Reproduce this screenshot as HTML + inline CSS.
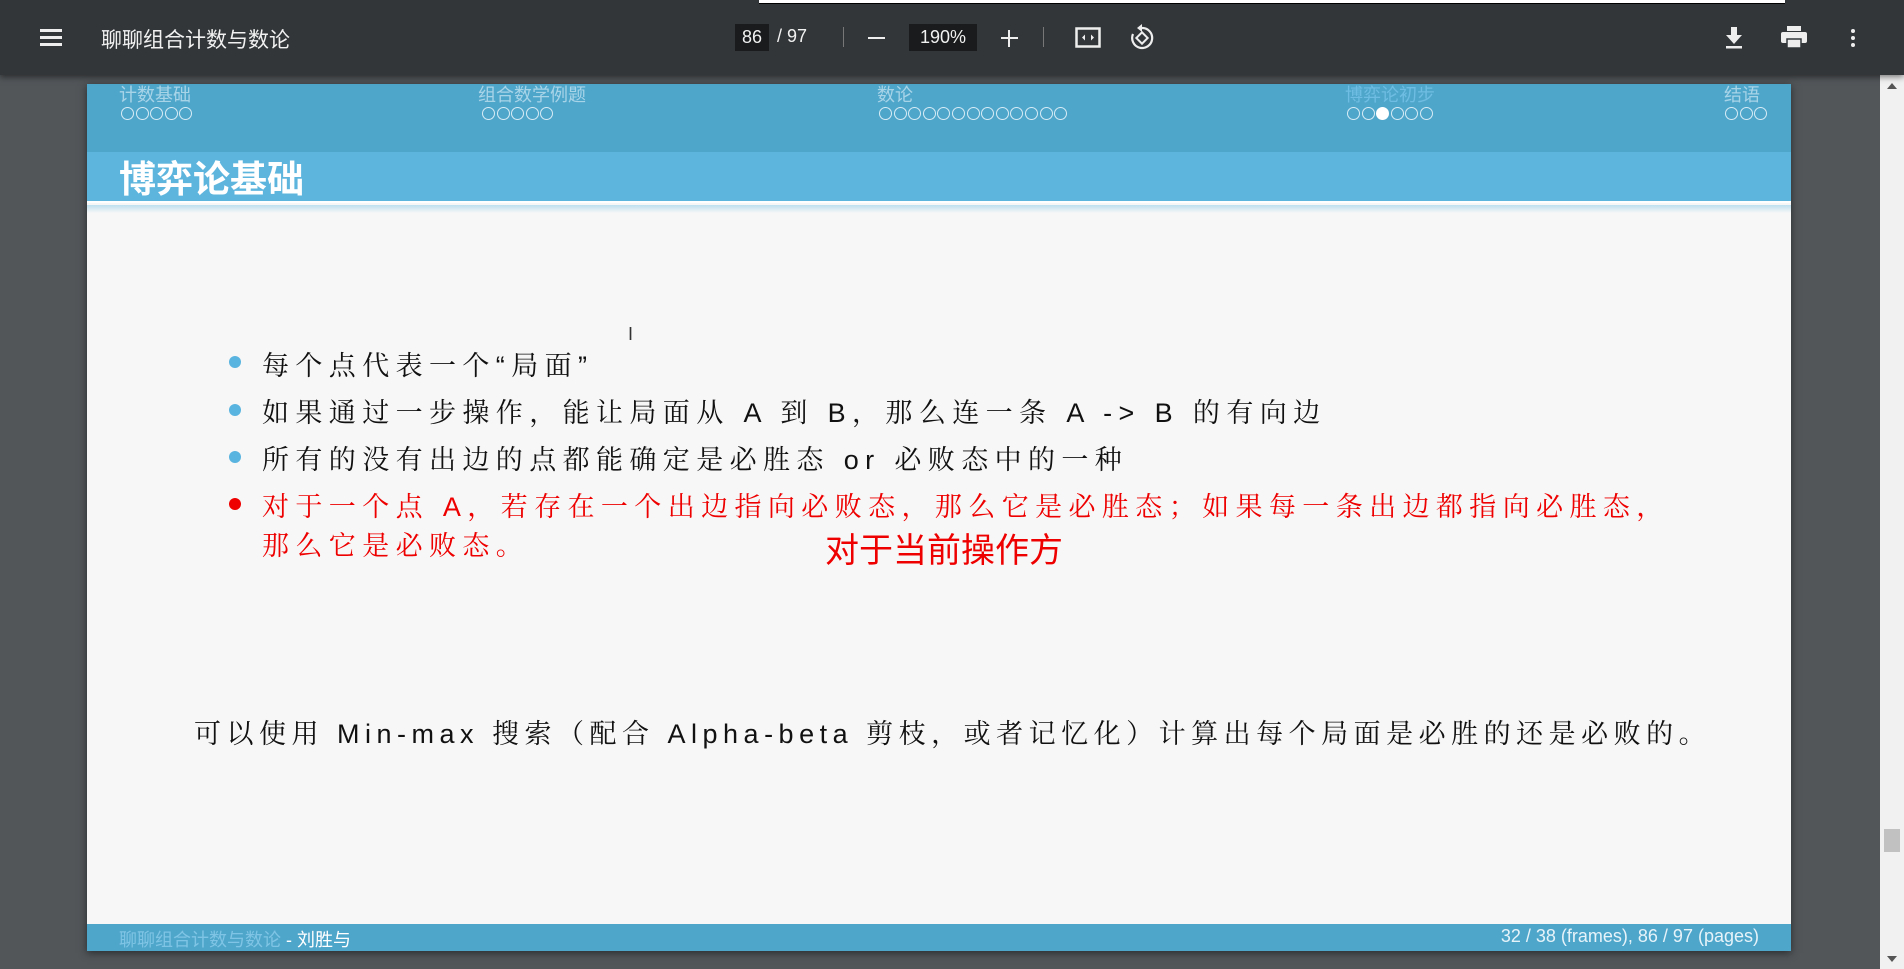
<!DOCTYPE html>
<html><head><meta charset="utf-8"><style>
*{margin:0;padding:0;box-sizing:border-box}
body{width:1904px;height:969px;background:#525659;position:relative;overflow:hidden;font-family:"Liberation Sans","Noto Sans CJK SC",sans-serif}
.tb{position:absolute;left:0;top:0;width:1904px;height:75px;background:#323639;box-shadow:0 2px 6px rgba(0,0,0,.5);color:#f1f1f1;z-index:2}
.abs{position:absolute}
.slide{position:absolute;left:87px;top:84px;width:1704px;height:867px;background:#f7f7f7;box-shadow:0 2px 8px rgba(0,0,0,.5)}
.nav{position:absolute;left:0;top:0;width:100%;height:68px;background:#4fa6cb}
.nav .it{position:absolute;top:1px;color:#a8d4e8;font-size:18px;line-height:20px}
.dots{position:absolute;top:23px;display:flex;gap:1.6px}
.dots i{width:13px;height:13px;border:1.5px solid #d7ecf5;border-radius:50%;display:block}
.dots i.f{background:#fff;border-color:#fff}
.title{position:absolute;left:0;top:68px;width:100%;height:51px;background:#5db5de;border-bottom:2px solid #fff}
.title span{position:absolute;left:32px;top:5px;color:#fff;font-size:37px;font-weight:bold;line-height:46px}
.grad{position:absolute;left:0;top:121px;width:100%;height:8px;background:linear-gradient(#bfe0f0,#f7f7f7)}
.li{position:absolute;left:175px;font-family:"Liberation Sans","Noto Serif CJK SC",serif;font-size:27px;letter-spacing:6.4px;color:#111;white-space:nowrap}
.bul{position:absolute;left:142px;width:12px;height:12px;border-radius:50%;background:#5ab4e0}
.red{color:#ee0000}
.foot{position:absolute;left:0;bottom:0;width:100%;height:27px;background:#4fa6cb;font-size:18px}
.sb{position:absolute;left:1880px;top:75px;width:24px;height:894px;background:#f1f1f1}
</style></head><body>
<div class="tb">
 <div class="abs" style="left:40px;top:29px;width:22px;height:3px;background:#eee;box-shadow:0 7px 0 #eee,0 14px 0 #eee"></div>
 <div class="abs" style="left:101px;top:24px;font-size:21px">聊聊组合计数与数论</div>
 <div class="abs" style="left:735px;top:24px;width:34px;height:27px;background:#191b1c;font-size:18px;text-align:center;line-height:27px">86</div>
 <div class="abs" style="left:777px;top:26px;font-size:18px">/ 97</div>
 <div class="abs" style="left:843px;top:27px;width:1px;height:20px;background:#777"></div>
 <div class="abs" style="left:868px;top:37px;width:17px;height:2px;background:#eee"></div>
 <div class="abs" style="left:909px;top:24px;width:68px;height:27px;background:#191b1c;font-size:18px;text-align:center;line-height:27px">190%</div>
 <div class="abs" style="left:1001px;top:37px;width:17px;height:2px;background:#eee"></div>
 <div class="abs" style="left:1008px;top:30px;width:2px;height:17px;background:#eee"></div>
 <div class="abs" style="left:1043px;top:27px;width:1px;height:20px;background:#777"></div>
 <svg class="abs" style="left:1075px;top:26px" width="26" height="24" viewBox="0 0 26 24"><rect x="1.5" y="2.5" width="23" height="18" fill="none" stroke="#eee" stroke-width="2.5"/><path d="M7 11.5l3-3v6zM19 11.5l-3-3v6z" fill="#eee"/></svg>
 <svg class="abs" style="left:1129px;top:24px" width="26" height="28" viewBox="0 0 26 28"><path d="M13 4a10 10 0 1 1-9 6" fill="none" stroke="#eee" stroke-width="2.2"/><path d="M13 0v8l-5-4z" fill="#eee"/><rect x="9" y="10" width="8" height="8" transform="rotate(45 13 14)" fill="none" stroke="#eee" stroke-width="2"/></svg>
 <svg class="abs" style="left:1724px;top:27px" width="20" height="22" viewBox="0 0 20 22"><path d="M7 0h6v8h5l-8 9-8-9h5z" fill="#eee"/><rect x="2" y="19" width="16" height="2.5" fill="#eee"/></svg>
 <svg class="abs" style="left:1781px;top:26px" width="26" height="22" viewBox="0 0 26 22"><rect x="6" y="0" width="14" height="5" fill="#eee"/><rect x="0" y="6" width="26" height="11" rx="2" fill="#eee"/><rect x="6" y="13" width="14" height="9" fill="#eee" stroke="#323639" stroke-width="1.5"/></svg>
 <div class="abs" style="left:1851px;top:29px;width:4px;height:4px;border-radius:50%;background:#eee;box-shadow:0 7px 0 #eee,0 14px 0 #eee"></div>
</div>
<div class="abs" style="left:759px;top:0;width:1026px;height:4px;background:#fff;border-bottom:1px solid #000;z-index:3"></div>
<div class="slide">
 <div class="nav">
  <div class="it" style="left:32px">计数基础</div><div class="dots" style="left:34px"><i></i><i></i><i></i><i></i><i></i></div>
  <div class="it" style="left:391px">组合数学例题</div><div class="dots" style="left:395px"><i></i><i></i><i></i><i></i><i></i></div>
  <div class="it" style="left:790px">数论</div><div class="dots" style="left:792px"><i></i><i></i><i></i><i></i><i></i><i></i><i></i><i></i><i></i><i></i><i></i><i></i><i></i></div>
  <div class="it" style="left:1258px;color:#6fbde2">博弈论初步</div><div class="dots" style="left:1260px"><i></i><i></i><i class="f"></i><i></i><i></i><i></i></div>
  <div class="it" style="left:1637px">结语</div><div class="dots" style="left:1638px"><i></i><i></i><i></i></div>
 </div>
 <div class="title"><span>博弈论基础</span></div>
 <div class="grad"></div>
 <div class="abs" style="left:541px;top:240px;font-size:18px;color:#333">I</div>
 <div class="bul" style="top:272px"></div><div class="li" style="top:260px">每个点代表一个“局面”</div>
 <div class="bul" style="top:320px"></div><div class="li" style="top:307px">如果通过一步操作，能让局面从 A 到 B，那么连一条 A -&gt; B 的有向边</div>
 <div class="bul" style="top:367px"></div><div class="li" style="top:354px">所有的没有出边的点都能确定是必胜态 or 必败态中的一种</div>
 <div class="bul" style="top:414px;background:#ee0000"></div><div class="li red" style="top:401px">对于一个点 A，若存在一个出边指向必败态，那么它是必胜态；如果每一条出边都指向必胜态，</div>
 <div class="li red" style="top:440px">那么它是必败态。</div>
 <div class="abs red" style="left:738px;top:439px;font-size:34px">对于当前操作方</div>
 <div class="li" style="left:107px;top:628px;letter-spacing:5.5px">可以使用 Min-max 搜索（配合 Alpha-beta 剪枝，或者记忆化）计算出每个局面是必胜的还是必败的。</div>
 <div class="foot">
  <span class="abs" style="left:32px;top:2px;color:#7fc4e4">聊聊组合计数与数论 <span style="color:#fff">- 刘胜与</span></span>
  <span class="abs" style="right:32px;top:2px;color:#e6f3f9">32 / 38 (frames), 86 / 97 (pages)</span>
 </div>
</div>
<div class="sb">
 <div class="abs" style="left:7px;top:8px;width:0;height:0;border-left:5px solid transparent;border-right:5px solid transparent;border-bottom:6px solid #555"></div>
 <div class="abs" style="left:4px;top:754px;width:16px;height:23px;background:#c1c1c1"></div>
 <div class="abs" style="left:7px;top:881px;width:0;height:0;border-left:5px solid transparent;border-right:5px solid transparent;border-top:6px solid #555"></div>
</div>
</body></html>
